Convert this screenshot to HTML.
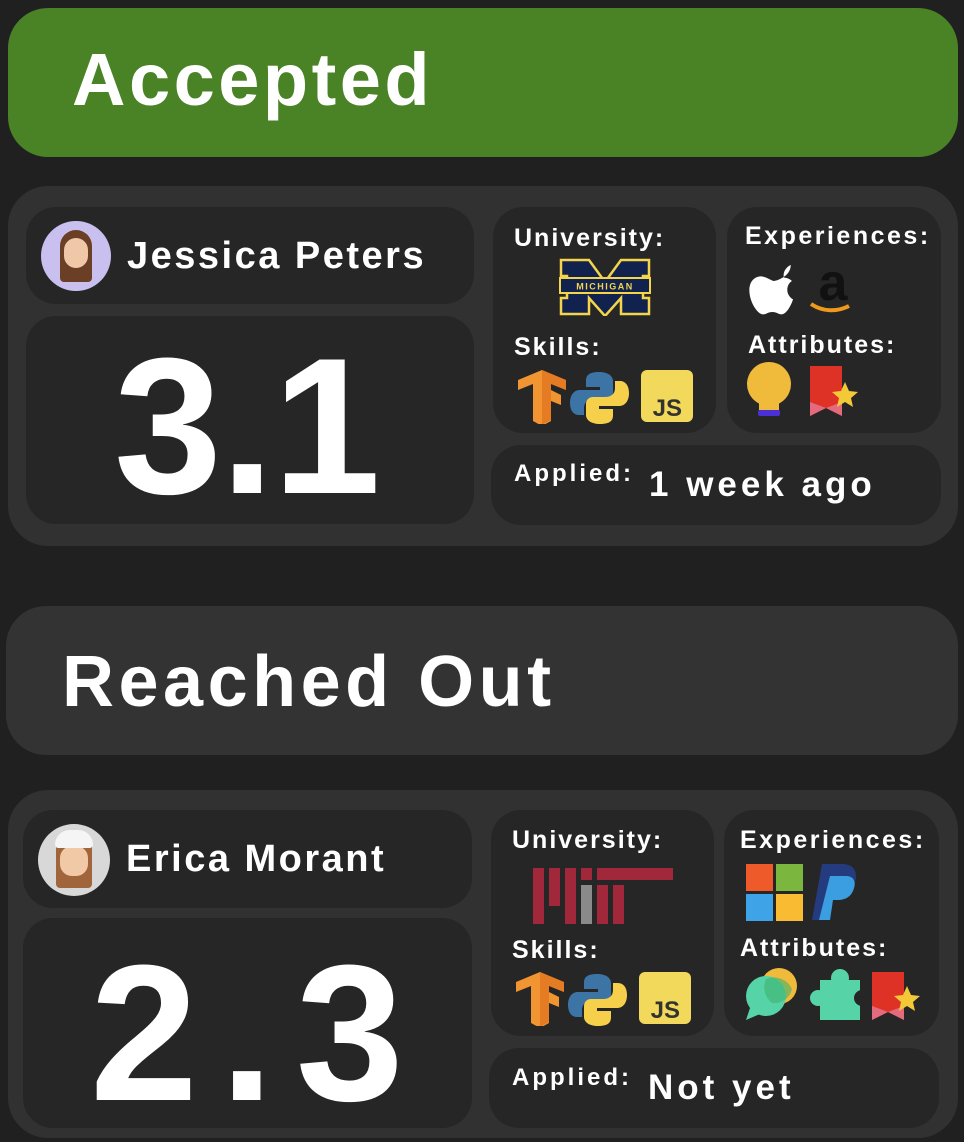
<!DOCTYPE html>
<html><head><meta charset="utf-8"><style>
*{margin:0;padding:0;box-sizing:border-box}
body{width:964px;height:1142px;background:#202020;position:relative;overflow:hidden;font-family:"Liberation Sans",sans-serif;font-weight:bold;color:#fff}
.a{position:absolute}
.outer{background:#313131;border-radius:40px}
.in{background:#262626;border-radius:30px}
.lbl{font-size:25px;position:absolute;white-space:nowrap;letter-spacing:2px}
.big{font-size:194px;letter-spacing:-1.5px;line-height:1;position:absolute}
.name{font-size:38px;position:absolute;white-space:nowrap;letter-spacing:2.5px}
</style></head><body>
<div class="a" style="left:8px;top:8px;width:950px;height:149px;background:#4a8226;border-radius:40px"></div>
<div class="a" style="left:72px;top:40px;font-size:74px;line-height:80px;letter-spacing:3.5px">Accepted</div>

<div class="a outer" style="left:8px;top:186px;width:950px;height:360px"></div>
<div class="a in" style="left:26px;top:207px;width:448px;height:97px"></div>
<div class="a" style="left:41px;top:221px;width:70px;height:70px;border-radius:50%;background:#c9c0ef"></div>
<div class="a" style="left:60px;top:230px;width:32px;height:52px;border-radius:16px 16px 4px 4px;background:#6b3f26"></div>
<div class="a" style="left:64px;top:238px;width:24px;height:30px;border-radius:12px;background:#f0c8a8"></div>
<div class="name" style="left:127px;top:235px">Jessica Peters</div>
<div class="a in" style="left:26px;top:316px;width:448px;height:208px"></div>
<div class="big" style="left:114px;top:330px">3.1</div>

<div class="a in" style="left:493px;top:207px;width:223px;height:226px"></div>
<div class="lbl" style="left:514px;top:224px">University:</div>
<svg class="a" style="left:558px;top:258px" width="94" height="58" viewBox="0 0 94 58"><path d="M3 2h28l16 22 16-22h28v16h-6v22h6v16H63V40l-16 18-16-18v16H3V40h6V18H3z" fill="#12224e" stroke="#f3d44a" stroke-width="2.5"/><rect x="2" y="20" width="90" height="15" fill="#12224e" stroke="#f3d44a" stroke-width="2"/><text x="47" y="31.5" font-size="9" fill="#f3d44a" text-anchor="middle" font-family="Liberation Sans" font-weight="bold" letter-spacing="1.5">MICHIGAN</text></svg>
<div class="lbl" style="left:514px;top:333px">Skills:</div>
<svg class="a" style="left:516px;top:370px" width="178" height="54" viewBox="0 0 178 54"><path d="M2 10l24-10 24 10v10l-15-6v6l10 5v10l-10-4v20l-9 5-9-5V14L2 20z" fill="#f19532"/><path d="M26 0l24 10v10l-15-6v36l-9 5z" fill="#e0701d" opacity=".7"/><path d="M83 2c-12 0-13 5-13 9v6h14v3H64c-6 0-10 5-10 13s4 12 9 12h5v-7c0-6 4-9 10-9h12c4 0 7-3 7-7V11c0-5-5-9-14-9z" fill="#3c74a6"/><path d="M84 54c12 0 13-5 13-9v-6H83v-3h20c6 0 10-5 10-13s-4-12-9-12h-5v7c0 6-4 9-10 9H77c-4 0-7 3-7 7v11c0 5 5 9 14 9z" fill="#f6d04a"/><rect x="125" y="0" width="52" height="52" rx="6" fill="#f2d95c"/><text x="166" y="46" font-size="24" fill="#323330" text-anchor="end" font-family="Liberation Sans" font-weight="bold">JS</text></svg>

<div class="a in" style="left:727px;top:207px;width:214px;height:226px"></div>
<div class="lbl" style="left:745px;top:222px;letter-spacing:2.5px">Experiences:</div>
<svg class="a" style="left:745px;top:258px" width="120" height="60" viewBox="0 0 120 60"><g transform="translate(-6,0) scale(1.15)"><path d="M30 14c4 0 7-3 9-3-1-5 2-9 6-11 0 5-3 9-7 11 3 0 6 1 8 3-5 3-6 12 1 16-2 6-6 13-10 13-3 0-4-2-8-2s-5 2-8 2c-5 0-12-11-12-21 0-8 5-12 10-12 4 0 6 2 11 4z" fill="#fff" transform="translate(0,6)"/></g><text x="88" y="42" font-size="52" fill="#111" text-anchor="middle" font-family="Liberation Sans" font-weight="bold">a</text><path d="M66 46c12 8 26 8 38 2" stroke="#f09a1c" stroke-width="4" fill="none"/></svg>
<div class="lbl" style="left:748px;top:331px">Attributes:</div>
<svg class="a" style="left:746px;top:362px" width="118" height="60" viewBox="0 0 118 60"><circle cx="23" cy="22" r="22" fill="#f0bb3a"/><rect x="13" y="40" width="20" height="8" fill="#f0bb3a"/><rect x="12" y="48" width="22" height="6" rx="2" fill="#4d2fd6"/><path d="M64 4h32v50l-16-8-16 8z" fill="#df3227"/><path d="M64 40l16 6-16 8z" fill="#e46b7d"/><path d="M96 40l-16 6 16 8z" fill="#e46b7d"/><path d="M99 20l4 9 9 1-7 6 2 9-8-5-8 5 2-9-7-6 9-1z" fill="#f4c937"/></svg>

<div class="a in" style="left:491px;top:445px;width:450px;height:80px"></div>
<div class="lbl" style="left:514px;top:460px;font-size:24px;letter-spacing:3px">Applied:</div>
<div class="a" style="left:649px;top:465px;font-size:35px;white-space:nowrap;letter-spacing:4px">1 week ago</div>

<div class="a" style="left:6px;top:606px;width:952px;height:149px;background:#333;border-radius:40px"></div>
<div class="a" style="left:62px;top:642px;font-size:72px;line-height:80px;letter-spacing:4.5px">Reached Out</div>

<div class="a outer" style="left:8px;top:790px;width:950px;height:348px"></div>
<div class="a in" style="left:23px;top:810px;width:449px;height:98px"></div>
<div class="a" style="left:38px;top:824px;width:72px;height:72px;border-radius:50%;background:#d8d8d8"></div>
<div class="a" style="left:56px;top:832px;width:36px;height:56px;border-radius:16px 16px 4px 4px;background:#a0653a"></div>
<div class="a" style="left:60px;top:846px;width:28px;height:30px;border-radius:12px;background:#f2c9a6"></div>
<div class="a" style="left:55px;top:830px;width:38px;height:18px;border-radius:18px 18px 4px 4px;background:#f5f5f5"></div>
<div class="name" style="left:126px;top:838px">Erica Morant</div>
<div class="a in" style="left:23px;top:918px;width:449px;height:210px"></div>
<div class="big" style="left:90px;top:937px;letter-spacing:22px">2.3</div>

<div class="a in" style="left:491px;top:810px;width:223px;height:226px"></div>
<div class="lbl" style="left:512px;top:826px">University:</div>
<svg class="a" style="left:533px;top:868px" width="140" height="56" viewBox="0 0 140 56"><rect x="0" y="0" width="11" height="56" fill="#a1283a"/><rect x="16" y="0" width="11" height="38" fill="#a1283a"/><rect x="32" y="0" width="11" height="56" fill="#a1283a"/><rect x="48" y="0" width="11" height="12" fill="#a1283a"/><rect x="48" y="17" width="11" height="39" fill="#8a8a8a"/><rect x="64" y="0" width="76" height="12" fill="#a1283a"/><rect x="64" y="17" width="11" height="39" fill="#a1283a"/><rect x="80" y="17" width="11" height="39" fill="#a1283a"/></svg>
<div class="lbl" style="left:512px;top:936px">Skills:</div>
<svg class="a" style="left:514px;top:972px" width="178" height="54" viewBox="0 0 178 54"><path d="M2 10l24-10 24 10v10l-15-6v6l10 5v10l-10-4v20l-9 5-9-5V14L2 20z" fill="#f19532"/><path d="M26 0l24 10v10l-15-6v36l-9 5z" fill="#e0701d" opacity=".7"/><path d="M83 2c-12 0-13 5-13 9v6h14v3H64c-6 0-10 5-10 13s4 12 9 12h5v-7c0-6 4-9 10-9h12c4 0 7-3 7-7V11c0-5-5-9-14-9z" fill="#3c74a6"/><path d="M84 54c12 0 13-5 13-9v-6H83v-3h20c6 0 10-5 10-13s-4-12-9-12h-5v7c0 6-4 9-10 9H77c-4 0-7 3-7 7v11c0 5 5 9 14 9z" fill="#f6d04a"/><rect x="125" y="0" width="52" height="52" rx="6" fill="#f2d95c"/><text x="166" y="46" font-size="24" fill="#323330" text-anchor="end" font-family="Liberation Sans" font-weight="bold">JS</text></svg>

<div class="a in" style="left:724px;top:810px;width:215px;height:226px"></div>
<div class="lbl" style="left:740px;top:826px;letter-spacing:2.5px">Experiences:</div>
<svg class="a" style="left:746px;top:862px" width="116" height="60" viewBox="0 0 116 60"><rect x="0" y="2" width="27" height="27" fill="#ef5a2a"/><rect x="30" y="2" width="27" height="27" fill="#7bb73f"/><rect x="0" y="32" width="27" height="27" fill="#3fa3e8"/><rect x="30" y="32" width="27" height="27" fill="#f9bb32"/><path d="M76 2h20c12 0 16 8 13 18-3 10-10 14-20 14h-6l-4 24H66z" fill="#253b80"/><path d="M84 14h16c8 0 10 6 8 12-2 8-8 12-16 12h-5l-3 20h-11z" fill="#3b9ee0"/></svg>
<div class="lbl" style="left:740px;top:934px">Attributes:</div>
<svg class="a" style="left:746px;top:968px" width="176" height="54" viewBox="0 0 176 54"><circle cx="33" cy="18" r="18" fill="#f0bb3a"/><circle cx="20" cy="28" r="20" fill="#56d4a8"/><path d="M4 40l-4 12 14-6z" fill="#56d4a8"/><path d="M20 11a20 20 0 0 1 26 10 18 18 0 0 1-20 14 20 20 0 0 1 -6-24z" fill="#3fb36e" opacity=".6"/><rect x="74" y="12" width="40" height="40" fill="#56d4a8"/><circle cx="94" cy="10" r="9" fill="#56d4a8"/><circle cx="72" cy="30" r="8" fill="#56d4a8"/><circle cx="116" cy="30" r="8" fill="#262626"/><path d="M126 4h32v48l-16-8-16 8z" fill="#df3227"/><path d="M126 38l16 6-16 8z" fill="#e46b7d"/><path d="M158 38l-16 6 16 8z" fill="#e46b7d"/><path d="M161 18l4 9 9 1-7 6 2 9-8-5-8 5 2-9-7-6 9-1z" fill="#f4c937"/></svg>

<div class="a in" style="left:489px;top:1048px;width:450px;height:80px"></div>
<div class="lbl" style="left:512px;top:1064px;font-size:24px;letter-spacing:3px">Applied:</div>
<div class="a" style="left:648px;top:1068px;font-size:35px;white-space:nowrap;letter-spacing:4px">Not yet</div>
</body></html>
